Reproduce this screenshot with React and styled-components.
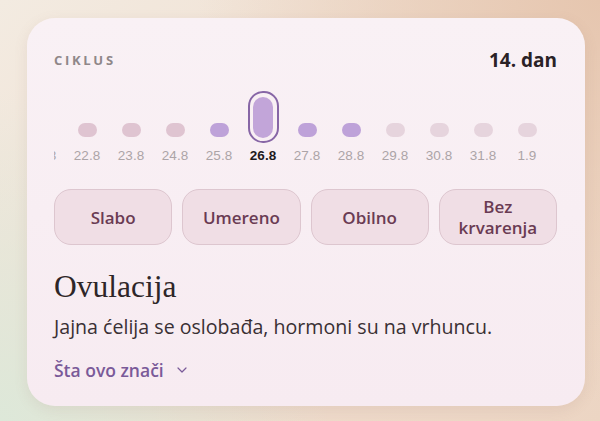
import React from "react";
import styled, { createGlobalStyle } from "styled-components";
import { ChevronDown } from "lucide-react";

const GlobalStyle = createGlobalStyle`
  html, body {
    margin: 0;
    padding: 0;
  }
  body {
    width: 600px;
    height: 421px;
    overflow: hidden;
    font-family: "Open Sans", "Noto Sans", sans-serif;
    background:
      radial-gradient(circle at 0% 100%, #dde8d9 0%, rgba(221, 232, 217, 0) 45%),
      radial-gradient(circle at 100% 0%, #e6c6af 0%, rgba(230, 198, 175, 0) 55%),
      linear-gradient(135deg, #f3ebe1 0%, #efdccd 60%, #ecd5c3 100%);
  }
`;

// the strip is scrolled a little, so 21.8 sits mostly under the left edge
const days = [
  { label: "21.8", kind: "past" },
  { label: "22.8", kind: "past" },
  { label: "23.8", kind: "past" },
  { label: "24.8", kind: "past" },
  { label: "25.8", kind: "fertile" },
  { label: "26.8", kind: "fertile", selected: true },
  { label: "27.8", kind: "fertile" },
  { label: "28.8", kind: "fertile" },
  { label: "29.8", kind: "future" },
  { label: "30.8", kind: "future" },
  { label: "31.8", kind: "future" },
  { label: "1.9", kind: "future" },
];

const flows = ["Slabo", "Umereno", "Obilno", "Bez krvarenja"];

const App = () => {
  return (
    <>
      <GlobalStyle />
      <Page>
        <Card>
          <Header>
            <Eyebrow>CIKLUS</Eyebrow>
            <DayCount>14. dan</DayCount>
          </Header>

          <Strip>
            <StripInner>
              {days.map((d) => (
                <Day key={d.label}>
                  <PillArea>
                    {d.selected ? (
                      <SelectedRing>
                        <SelectedFill />
                      </SelectedRing>
                    ) : (
                      <Pill kind={d.kind} />
                    )}
                  </PillArea>
                  <DayLabel selected={d.selected}>{d.label}</DayLabel>
                </Day>
              ))}
            </StripInner>
          </Strip>

          <Flows>
            {flows.map((f) => (
              <FlowButton key={f}>{f}</FlowButton>
            ))}
          </Flows>

          <Phase>Ovulacija</Phase>
          <Description>Jajna ćelija se oslobađa, hormoni su na vrhuncu.</Description>
          <MoreLink>
            Šta ovo znači
            <ChevronDown size={16} strokeWidth={1.8} />
          </MoreLink>
        </Card>
      </Page>
    </>
  );
};

const Page = styled.div`
  padding: 18px 15px 0 27px;
`;

const Card = styled.div`
  box-sizing: border-box;
  width: 558px;
  height: 388px;
  border-radius: 28px;
  background: linear-gradient(180deg, #f9f1f5 0%, #f7ebf1 100%);
  box-shadow: 0 4px 14px rgba(150, 110, 100, 0.12);
  padding: 30px 28px 0 27px;
  display: flex;
  flex-direction: column;
`;

const Header = styled.div`
  display: flex;
  justify-content: space-between;
  align-items: center;
  height: 24px;
`;

const Eyebrow = styled.div`
  font-size: 13px;
  font-weight: 700;
  letter-spacing: 2.7px;
  color: #8f8789;
`;

const DayCount = styled.div`
  font-size: 19px;
  font-weight: 700;
  color: #2a2226;
`;

const Strip = styled.div`
  margin-top: 19px;
  overflow: hidden;
  margin-right: -1px;
`;

const StripInner = styled.div`
  display: flex;
  margin-left: -33px;
`;

const Day = styled.div`
  flex: 0 0 44px;
  display: flex;
  flex-direction: column;
  align-items: center;
`;

const PillArea = styled.div`
  height: 52px;
  display: flex;
  align-items: flex-end;
  justify-content: center;
`;

const pillColors = {
  past: "#dfc4d1",
  fertile: "#bea2d9",
  future: "#e6d4dd",
};

const Pill = styled.div`
  width: 19px;
  height: 14px;
  border-radius: 7px;
  margin-bottom: 6px;
  background: ${(p) => pillColors[p.kind]};
`;

const SelectedRing = styled.div`
  box-sizing: border-box;
  width: 31px;
  height: 52px;
  border: 2.5px solid #8766a6;
  border-radius: 15px;
  padding: 3.5px;
  display: flex;
`;

const SelectedFill = styled.div`
  flex: 1;
  border-radius: 10px;
  background: #c2a5d9;
`;

const DayLabel = styled.div`
  margin-top: 5px;
  font-family: "Liberation Sans", Arial, sans-serif;
  font-size: 13.5px;
  line-height: 16px;
  color: ${(p) => (p.selected ? "#1e1a1c" : "#aca4a7")};
  font-weight: ${(p) => (p.selected ? 700 : 400)};
`;

const Flows = styled.div`
  margin-top: 25px;
  display: grid;
  grid-template-columns: repeat(4, 1fr);
  gap: 10px;
`;

const FlowButton = styled.button`
  height: 56px;
  border-radius: 17px;
  border: 1px solid #ddc6cf;
  background: #f0dee5;
  color: #6a3b53;
  font-family: "Open Sans", "Noto Sans", sans-serif;
  font-size: 17px;
  font-weight: 600;
  line-height: 21px;
  padding: 0 8px;
  cursor: pointer;
`;

const Phase = styled.h2`
  margin: 23px 0 0;
  font-family: "Liberation Serif", "DejaVu Serif", serif;
  font-weight: 400;
  font-size: 31.5px;
  line-height: 38px;
  color: #2e2628;
`;

const Description = styled.p`
  margin: 9px 0 0;
  font-size: 19.6px;
  line-height: 24px;
  color: #3a3034;
`;

const MoreLink = styled.div`
  margin-top: 19px;
  display: flex;
  align-items: center;
  gap: 10px;
  font-size: 17.5px;
  font-weight: 600;
  color: #7a5a99;
  cursor: pointer;
`;

export default App;
